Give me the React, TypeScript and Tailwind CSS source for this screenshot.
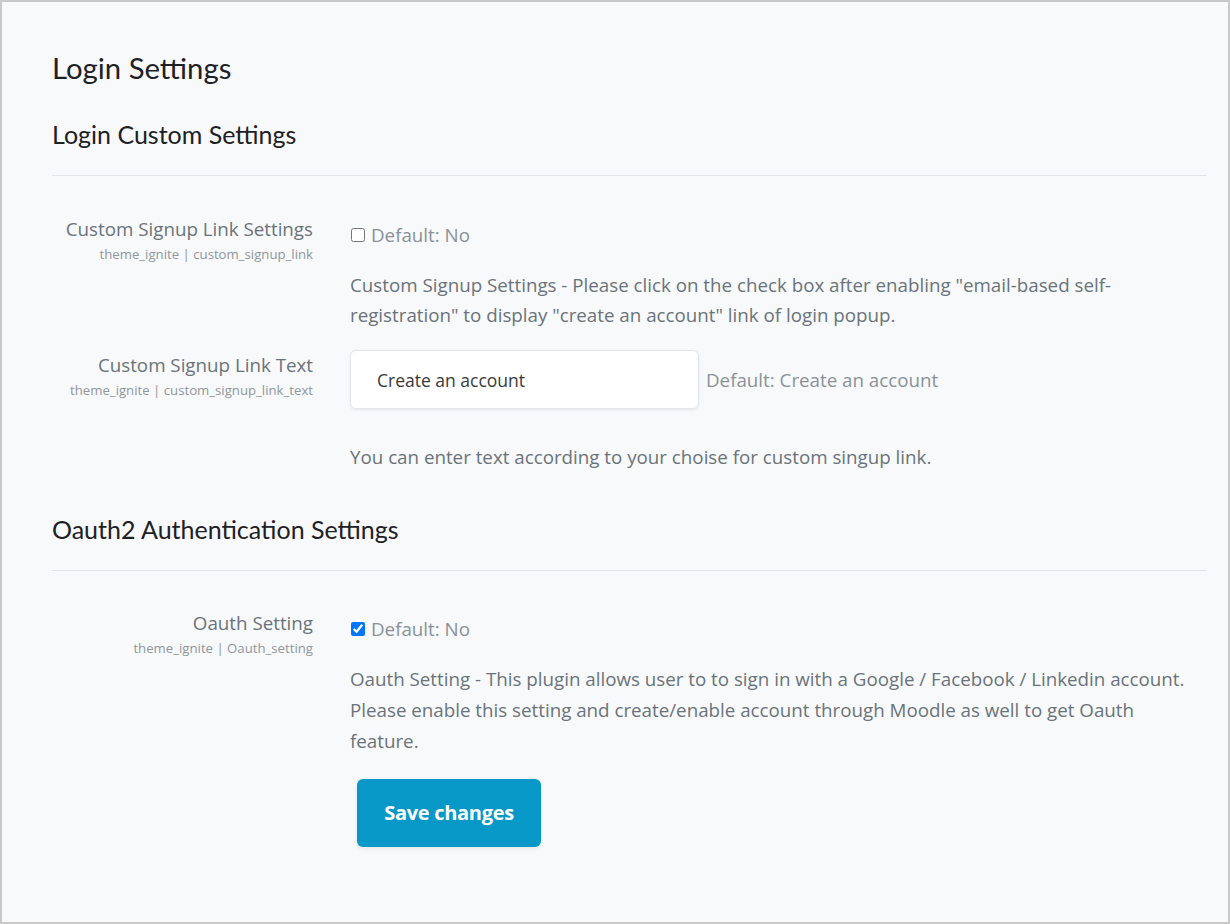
import { ReactNode } from "react";

const body = { fontFamily: '"Open Sans", "Liberation Sans", sans-serif' };
const head = { fontFamily: 'Lato, "Noto Sans", sans-serif' };

function SectionHeading({ children, className = "" }: { children: ReactNode; className?: string }) {
  return (
    <div className={className}>
      <h3 className="text-[25px] leading-[29px] text-[#1d2125]" style={head}>
        {children}
      </h3>
      <hr className="mt-[26px] border-t border-[#e1e4e8]" />
    </div>
  );
}

function SettingRow({
  label,
  name,
  children,
  className = "",
}: {
  label: string;
  name: string;
  children: ReactNode;
  className?: string;
}) {
  return (
    <div className={`flex ${className}`}>
      {/* Label column */}
      <div className="w-[261px] shrink-0 text-right">
        <div className="text-[18.75px] leading-[30px] text-[#6a737b]">{label}</div>
        <div className="text-[13.2px] leading-[20px] text-[#8f969e]">{name}</div>
      </div>
      {/* Control column */}
      <div className="ml-[37px] flex-1">{children}</div>
    </div>
  );
}

export default function App() {
  return (
    <div className="h-[924px] w-full border-2 border-[#c9c9c9] bg-[#f8f9fa]" style={body}>
      <div className="pl-[50px] pr-[21px] pt-[49px]">
        <h2 className="text-[29.3px] leading-[34px] text-[#1d2125]" style={head}>
          Login Settings
        </h2>

        <SectionHeading className="mt-[35px]">Login Custom Settings</SectionHeading>

        {/* Custom signup link */}
        <SettingRow label="Custom Signup Link Settings" name="theme_ignite | custom_signup_link" className="mt-[38px]">
          <label className="mt-[6px] flex items-center gap-[6px] text-[18.75px] leading-[30px] text-[#8a9199]">
            <input type="checkbox" className="ml-[1px] h-[14px] w-[14px]" />
            Default: No
          </label>
          <p className="mt-[20px] text-[18.75px] leading-[30px] text-[#6a737b]">
            Custom Signup Settings - Please click on the check box after enabling "email-based self-registration" to
            display "create an account" link of login popup.
          </p>
        </SettingRow>

        <SettingRow label="Custom Signup Link Text" name="theme_ignite | custom_signup_link_text" className="mt-[20px]">
          <div className="flex items-center">
            <input
              type="text"
              defaultValue="Create an account"
              className="h-[59px] w-[349px] rounded-md border border-[#e3e6ea] bg-white px-[26px] text-[17.5px] text-[#373a3c] shadow-[0_1px_3px_rgba(0,0,0,0.08)] outline-none"
            />
            <span className="ml-[7px] pt-[2px] text-[18.75px] text-[#8a9199]">Default: Create an account</span>
          </div>
          <p className="mt-[33px] text-[18.75px] leading-[30px] text-[#6a737b]">
            You can enter text according to your choise for custom singup link.
          </p>
        </SettingRow>

        <SectionHeading className="mt-[43px]">Oauth2 Authentication Settings</SectionHeading>

        <SettingRow label="Oauth Setting" name="theme_ignite | Oauth_setting" className="mt-[37px]">
          <label className="mt-[6px] flex items-center gap-[6px] text-[18.75px] leading-[30px] text-[#8a9199]">
            <input type="checkbox" defaultChecked className="ml-[1px] h-[14px] w-[14px]" />
            Default: No
          </label>
          <p className="mt-[19px] text-[18.75px] leading-[31px] text-[#6a737b]">
            Oauth Setting - This plugin allows user to to sign in with a Google / Facebook / Linkedin account. Please
            enable this setting and create/enable account through Moodle as well to get Oauth feature.
          </p>
          <button
            type="button"
            className="ml-[7px] mt-[23px] h-[68px] w-[184px] rounded-md bg-[#0898c7] text-[20px] font-bold tracking-[-0.3px] text-white shadow-[0_2px_4px_rgba(0,0,0,0.08)]"
          >
            Save changes
          </button>
        </SettingRow>
      </div>
    </div>
  );
}
